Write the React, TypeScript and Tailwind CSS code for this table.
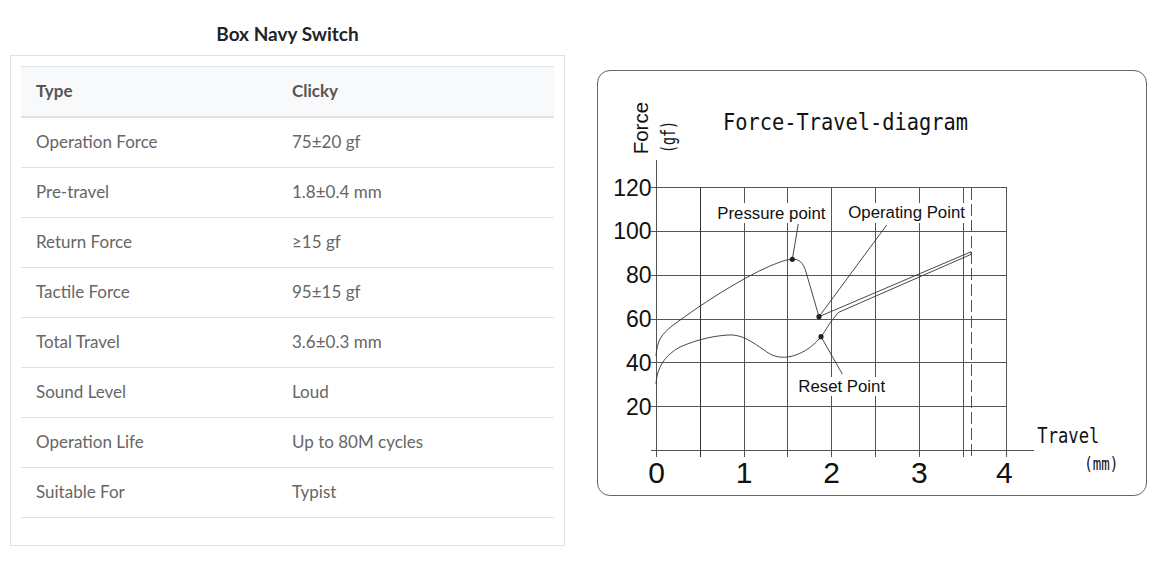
import React from "react";

const specs: [string, string][] = [
	["Operation Force", "75±20 gf"],
	["Pre-travel", "1.8±0.4 mm"],
	["Return Force", "≥15 gf"],
	["Tactile Force", "95±15 gf"],
	["Total Travel", "3.6±0.3 mm"],
	["Sound Level", "Loud"],
	["Operation Life", "Up to 80M cycles"],
	["Suitable For", "Typist"],
];

// chart scale: page pixels
const x0 = 656;
const mmPx = 87.6;
const y0 = 450;
const gfPx = 2.19;
const xAt = (mm: number) => x0 + mm * mmPx;
const yAt = (gf: number) => y0 - gf * gfPx;

const ForceTravelChart = () => {
	const gridTop = yAt(120);
	const gridRight = xAt(4);
	const halfSteps = [0.5, 1, 1.5, 2, 2.5, 3, 3.5, 4];
	const forces = [20, 40, 60, 80, 100, 120];
	const mono = "'DejaVu Sans Mono', monospace";
	const arial = "'Liberation Sans', Arial, sans-serif";

	return (
		<svg width={548} height={424} viewBox="598 71 548 424" className="block">
			<g stroke="#555" strokeWidth={1} shapeRendering="crispEdges">
				{forces.map((f) => (
					<line key={f} x1={651} x2={gridRight} y1={Math.round(yAt(f)) + 0.5} y2={Math.round(yAt(f)) + 0.5} />
				))}
				<line x1={651} x2={1034} y1={450.5} y2={450.5} />
				<line x1={656.5} x2={656.5} y1={160} y2={457} />
				{halfSteps.map((m) => (
					<line
						key={m}
						x1={Math.round(xAt(m)) + 0.5}
						x2={Math.round(xAt(m)) + 0.5}
						y1={Math.round(gridTop)}
						y2={457}
						stroke={m === 0.5 ? "#333" : "#555"}
					/>
				))}
				<line x1={971.5} x2={971.5} y1={188} y2={457} strokeDasharray="12 4" />
			</g>

			{/* curves */}
			<g fill="none" stroke="#333" strokeWidth={0.9}>
				<path d="M656,356 C657,340 662,334 672,326 C700,305 740,279 770,266 C780,262 786,259.5 792.3,259.3 C799,259 803,262 806,272 L819,316.7 L971,251.8 L971,254.4 L840,311.7" />
				<path d="M656,384 C657,368 664,356 680,347 C696,340 712,336 728,335 C742,334 752,342 764,350 C772,356 778,358 788,357 C800,355 812,348 821,336.7 C826,330 830,322 834,318 C836,315 838,312.5 840,311.7" />
				<line x1={792.3} y1={259.3} x2={798.3} y2={224} />
				<line x1={819} y1={316.7} x2={886.7} y2={225} />
				<line x1={821} y1={336.7} x2={842.3} y2={374} />
			</g>
			<g fill="#222">
				<circle cx={792.3} cy={259.3} r={2.6} />
				<circle cx={819} cy={316.7} r={2.6} />
				<circle cx={821} cy={336.7} r={2.6} />
			</g>

			{/* labels */}
			<rect x={714} y={203} width={114} height={20} fill="#fff" />
			<rect x={845} y={203} width={123} height={20} fill="#fff" />
			<rect x={795} y={377} width={94} height={19} fill="#fff" />
			<g fontFamily={arial} fontSize={16.8} fill="#111">
				<text x={717.3} y={218.5}>Pressure point</text>
				<text x={848.3} y={218}>Operating Point</text>
				<text x={798.3} y={391.7}>Reset Point</text>
			</g>

			<g fontFamily={arial} fontSize={23} fill="#111" textAnchor="end">
				{forces.map((f) => (
					<text key={f} x={651.5} y={yAt(f) + 8.3}>
						{f}
					</text>
				))}
			</g>
			<g fontFamily={arial} fontSize={30} fill="#111" textAnchor="middle">
				{[0, 1, 2, 3, 4].map((m) => (
					<text key={m} x={xAt(m) + 0.5 - (m === 4 ? 2.5 : 0)} y={483.3}>
						{m}
					</text>
				))}
			</g>

			<text fontFamily={mono} fontSize={23} fill="#111" x={723} y={129.5} textLength={245} lengthAdjust="spacingAndGlyphs">
				Force-Travel-diagram
			</text>
			<text fontFamily={arial} fontSize={20.5} fill="#111" transform="translate(647.5 154.3) rotate(-90)">
				Force
			</text>
			<text fontFamily={mono} fontSize={19.5} fill="#111" transform="translate(675 153) rotate(-90)" textLength={32} lengthAdjust="spacingAndGlyphs">
				(gf)
			</text>
			<text fontFamily={mono} fontSize={21} fill="#111" x={1037.3} y={443.3} textLength={62} lengthAdjust="spacingAndGlyphs">
				Travel
			</text>
			<text fontFamily={mono} fontSize={18} fill="#111" x={1084.3} y={470} textLength={34} lengthAdjust="spacingAndGlyphs">
				(mm)
			</text>
		</svg>
	);
};

const App = () => {
	return (
		<div className="flex items-start bg-white pl-[10px] font-['Lato','Open_Sans',sans-serif]">
			<div className="w-[555px]">
				<h2 className="pt-[22px] mb-[10px] text-center text-[19px] leading-[23px] font-bold text-[#212529]">
					Box Navy Switch
				</h2>
				<div className="border border-[#dee2e6] px-[10px] pt-[10px] pb-[27px]">
					<div className="grid grid-cols-[256px_1fr] h-[52px] items-center border-t border-b-2 border-[#dee2e6] bg-[#f8f9fa] text-[17px] font-bold text-[#555]">
						<span className="pl-[15px] -mt-[2px]">Type</span>
						<span className="pl-[15px] -mt-[2px]">Clicky</span>
					</div>
					{specs.map(([label, value]) => (
						<div
							key={label}
							className="grid grid-cols-[256px_1fr] h-[50px] items-center border-b border-[#dee2e6] text-[17px] text-[#666]"
						>
							<span className="pl-[15px] -mt-[2px]">{label}</span>
							<span className="pl-[15px] -mt-[2px]">{value}</span>
						</div>
					))}
				</div>
			</div>
			<div className="ml-[32px] mt-[70px] w-[550px] h-[426px] rounded-[13px] border border-[#666] overflow-hidden">
				<ForceTravelChart />
			</div>
		</div>
	);
};

export default App;
